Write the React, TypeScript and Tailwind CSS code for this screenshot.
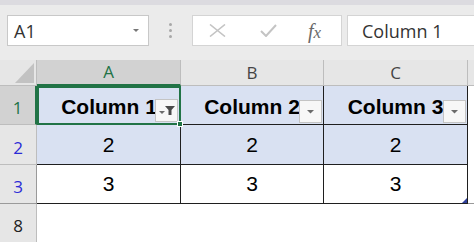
import React from "react";

const ui = { fontFamily: '"Open Sans", "Noto Sans", "Liberation Sans", sans-serif' };
const arial = { fontFamily: '"Liberation Sans", Arial, sans-serif' };

function DropBtn({ filter }: { filter?: boolean }) {
  return (
    <div className="absolute right-[1px] bottom-[1px] w-[23px] h-[23px] bg-[#f7f7f7] border border-[#c4c4c4] flex items-center justify-center">
      {filter ? (
        <svg width="21" height="21" viewBox="0 0 21 21">
          <path d="M3 11 L9 11 L6 14 Z" fill="#6b6b6b" />
          <path d="M9 6 L19 6 L15.5 10 L15.5 15 L12.5 15 L12.5 10 Z" fill="#4a4a4a" />
        </svg>
      ) : (
        <svg width="21" height="21" viewBox="0 0 21 21">
          <path d="M7 9 L14 9 L10.5 12.5 Z" fill="#6b6b6b" />
        </svg>
      )}
    </div>
  );
}

export default function App() {
  return (
    <div className="w-[474px] h-[242px] overflow-hidden bg-white relative" style={ui}>
      {/* formula bar */}
      <div className="h-[60px] bg-[#ebebeb] flex flex-col">
        <div className="h-[5px] bg-[#dcdbe0]" />
        <div className="flex items-start pt-[10px] pl-[7px]">
          <div className="w-[142px] h-[31px] bg-white border border-[#c8c8c8] flex items-center justify-between pl-[6px] pr-[8px]">
            <span className="text-[18px] text-[#333] leading-none">A1</span>
            <svg width="8" height="5" viewBox="0 0 8 5"><path d="M1 1 L7 1 L4 4 Z" fill="#777" /></svg>
          </div>
          <div className="w-[43px] h-[31px] flex flex-col items-center justify-center gap-[3px]">
            <div className="w-[3px] h-[3px] rounded-full bg-[#a8a8a8]" />
            <div className="w-[3px] h-[3px] rounded-full bg-[#a8a8a8]" />
            <div className="w-[3px] h-[3px] rounded-full bg-[#a8a8a8]" />
          </div>
          <div className="w-[150px] h-[31px] bg-white border border-[#d4d4d4] flex items-center">
            <svg className="ml-[16px]" width="17" height="13" viewBox="0 0 17 13">
              <path d="M1 0.5 L16 12.5 M16 0.5 L1 12.5" stroke="#c4c4c4" strokeWidth="1.6" />
            </svg>
            <svg className="ml-[34px]" width="17" height="13" viewBox="0 0 17 13">
              <path d="M1 7 L6 12 L16 1" stroke="#c4c4c4" strokeWidth="2" fill="none" />
            </svg>
            <span className="ml-[31px] text-[20px] italic text-[#6a6a6a] leading-none" style={{ fontFamily: '"Liberation Serif", serif' }}>
              f<span className="text-[17px]">x</span>
            </span>
          </div>
          <div className="ml-[5px] flex-1 h-[31px] bg-white border border-[#d4d4d4] border-r-0 flex items-center pl-[14px]">
            <span className="text-[18px] text-[#333] leading-none">Column 1</span>
          </div>
        </div>
      </div>

      {/* grid */}
      <div className="grid grid-cols-[37px_144px_143px_144px_1fr] grid-rows-[26px_39px_40px_39px_38px]">
        {/* header row */}
        <div className="bg-[#e6e6e6] border-r border-b border-[#bdbdbd] relative">
          <svg className="absolute right-[2px] bottom-[2px]" width="19" height="20" viewBox="0 0 19 20"><path d="M19 0 L19 20 L0 20 Z" fill="#c2c2c2" /></svg>
        </div>
        <div className="bg-[#d2d2d2] border-r border-[#bdbdbd] border-b-2 border-b-[#217346] flex items-center justify-center text-[17px] text-[#217346]">A</div>
        <div className="bg-[#e6e6e6] border-r border-b border-[#bdbdbd] flex items-center justify-center text-[17px] text-[#444]">B</div>
        <div className="bg-[#e6e6e6] border-r border-b border-[#bdbdbd] flex items-center justify-center text-[17px] text-[#444]">C</div>
        <div className="bg-[#e6e6e6] border-b border-[#bdbdbd]" />

        {/* row 1 */}
        <div className="bg-[#d2d2d2] border-r-2 border-r-[#217346] border-b border-[#bdbdbd] flex items-end justify-center pb-[4px] text-[17px] text-[#217346]">1</div>
        <div className="bg-[#d9e1f2] border-2 border-[#217346] relative flex items-end justify-center pb-[6px]" style={arial}>
          <span className="text-[21px] font-bold text-black leading-none">Column 1</span>
          <DropBtn filter />
          <div className="absolute -right-[4px] -bottom-[4px] w-[6px] h-[6px] bg-[#217346] border border-white z-10" />
        </div>
        <div className="bg-[#d9e1f2] border-r border-b border-[#1f1f1f] relative flex items-end justify-center pb-[7px]" style={arial}>
          <span className="text-[21px] font-bold text-black leading-none">Column 2</span>
          <DropBtn />
        </div>
        <div className="bg-[#d9e1f2] border-r border-b border-[#1f1f1f] relative flex items-end justify-center pb-[7px]" style={arial}>
          <span className="text-[21px] font-bold text-black leading-none">Column 3</span>
          <DropBtn />
        </div>
        <div className="bg-white" />

        {/* row 2 */}
        <div className="bg-[#e6e6e6] border-r border-b border-[#bdbdbd] flex items-end justify-center pb-[4px] text-[17px] text-[#2b2bd6]">2</div>
        <div className="bg-[#d9e1f2] border-r border-b border-[#1f1f1f] flex items-end justify-center pb-[9px] text-[21px] leading-none text-black" style={arial}>2</div>
        <div className="bg-[#d9e1f2] border-r border-b border-[#1f1f1f] flex items-end justify-center pb-[9px] text-[21px] leading-none text-black" style={arial}>2</div>
        <div className="bg-[#d9e1f2] border-r border-b border-[#1f1f1f] flex items-end justify-center pb-[9px] text-[21px] leading-none text-black" style={arial}>2</div>
        <div className="bg-white" />

        {/* row 3 */}
        <div className="bg-[#e6e6e6] border-r border-b border-[#9a9a9a] flex items-end justify-center pb-[4px] text-[17px] text-[#2b2bd6]">3</div>
        <div className="bg-white border-r border-b border-[#1f1f1f] flex items-end justify-center pb-[9px] text-[21px] leading-none text-black" style={arial}>3</div>
        <div className="bg-white border-r border-b border-[#1f1f1f] flex items-end justify-center pb-[9px] text-[21px] leading-none text-black" style={arial}>3</div>
        <div className="bg-white border-r border-b border-[#1f1f1f] flex items-end justify-center pb-[9px] text-[21px] leading-none text-black relative" style={arial}>
          3
          <svg className="absolute right-0 bottom-0" width="5" height="5" viewBox="0 0 5 5"><path d="M5 0 L5 5 L0 5 Z" fill="#2f3f9a" /></svg>
        </div>
        <div className="bg-white border-b border-[#9a9a9a]" />

        {/* row 8 */}
        <div className="bg-[#e6e6e6] border-r border-[#bdbdbd] flex items-end justify-center pb-[4px] text-[17px] text-[#222]">8</div>
        <div className="bg-white" />
        <div className="bg-white" />
        <div className="bg-white" />
        <div className="bg-white" />
      </div>
    </div>
  );
}
